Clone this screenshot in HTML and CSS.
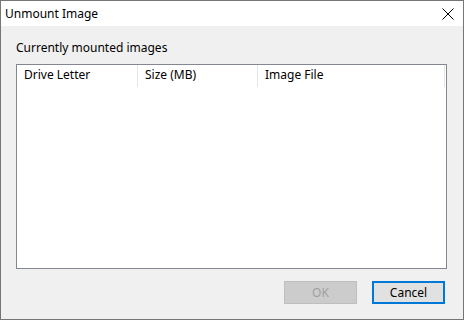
FILE: index.html
```html
<!DOCTYPE html>
<html lang="en">
<head>
  <meta charset="UTF-8">
  <title>Unmount Image</title>
  <link rel="stylesheet" href="styles.css">
</head>
<body>

  <!-- Dialog window -->
  <div class="window">
    <div class="titlebar">
      <span class="title">Unmount Image</span>
      <svg class="close" width="12" height="12" viewBox="0 0 12 12">
        <path d="M0.5 0.5 L11.5 11.5 M11.5 0.5 L0.5 11.5" stroke="#000" stroke-width="1" fill="none"/>
      </svg>
    </div>

    <div class="client">
      <div class="label">Currently mounted images</div>

      <div class="listview">
        <div class="list-header">
          <div class="col col-drive">Drive Letter</div>
          <div class="col col-size">Size (MB)</div>
          <div class="col col-file">Image File</div>
        </div>
      </div>

      <div class="buttons">
        <button class="btn" disabled>OK</button>
        <button class="btn btn-default">Cancel</button>
      </div>
    </div>
  </div>

</body>
</html>
```

FILE: styles.css
```css
/* General */
html, body {
  margin: 0;
  padding: 0;
  width: 464px;
  height: 320px;
  overflow: hidden;
}

body {
  font-family: 'Noto Sans', 'Open Sans', sans-serif;
  font-size: 12px;
  color: #000;
}

/* Window frame */
.window {
  box-sizing: border-box;
  width: 464px;
  height: 320px;
  border: 1px solid #767676;
  display: flex;
  flex-direction: column;
  background-color: #f0f0f0;
}

.titlebar {
  height: 25px;
  background-color: #ffffff;
  display: flex;
  align-items: center;
  justify-content: space-between;
  padding: 0 9px 0 4px;
  flex-shrink: 0;
}

.title {
  font-size: 12px;
  line-height: 16px;
}

.close {
  display: block;
}

/* Client area */
.client {
  flex: 1;
  display: flex;
  flex-direction: column;
  padding: 14px 16px 14px 15px;
}

.label {
  line-height: 16px;
  margin-bottom: 8px;
}

.listview {
  box-sizing: border-box;
  height: 205px;
  background-color: #ffffff;
  border: 1px solid #828790;
}

.list-header {
  display: flex;
  height: 22px;
  align-items: center;
}

.col {
  box-sizing: border-box;
  height: 22px;
  line-height: 20px;
  padding-left: 7px;
  border-right: 1px solid #e5e5e5;
}

.col-drive {
  width: 121px;
}

.col-size {
  width: 120px;
}

.col-file {
  width: 187px;
}

/* Buttons */
.buttons {
  display: flex;
  justify-content: flex-end;
  gap: 15px;
  margin-top: 12px;
  margin-right: 2px;
}

.btn {
  box-sizing: border-box;
  width: 73px;
  height: 23px;
  font-family: inherit;
  font-size: 12px;
  padding: 0;
  background-color: #e1e1e1;
  border: 1px solid #adadad;
  color: #000;
}

.btn:disabled {
  background-color: #cccccc;
  border-color: #bfbfbf;
  color: #a0a0a0;
}

.btn-default {
  border: 2px solid #0078d7;
}
```
